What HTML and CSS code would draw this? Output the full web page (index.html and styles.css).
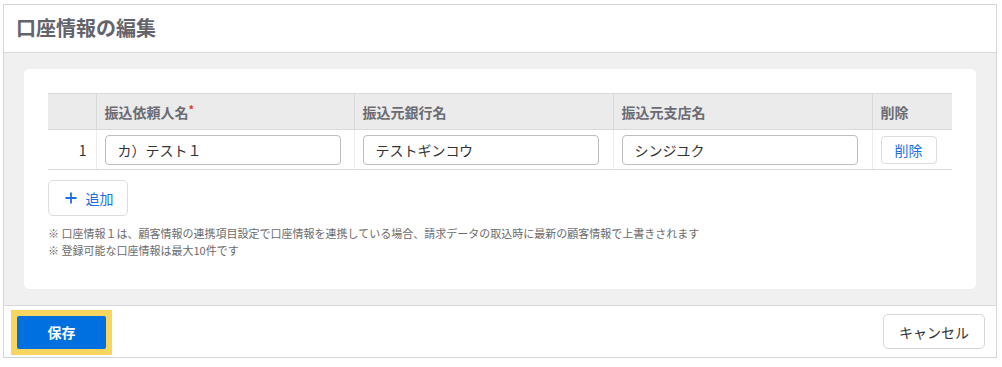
FILE: index.html
```html
<!DOCTYPE html>
<html lang="ja">
<head>
<meta charset="utf-8">
<title>口座情報の編集</title>
<link rel="stylesheet" href="styles.css">
</head>
<body>
<div class="frame">
  <header class="head">
    <h1 class="title">口座情報の編集</h1>
  </header>
  <main class="body">
    <section class="card">
      <table class="grid">
        <colgroup>
          <col class="c-no"><col class="c-name"><col class="c-bank"><col class="c-branch"><col class="c-del">
        </colgroup>
        <thead>
          <tr>
            <th></th>
            <th>振込依頼人名<span class="req">*</span></th>
            <th>振込元銀行名</th>
            <th>振込元支店名</th>
            <th>削除</th>
          </tr>
        </thead>
        <tbody>
          <tr>
            <td class="no">1</td>
            <td><input class="field" type="text" value="カ）テスト１"></td>
            <td><input class="field" type="text" value="テストギンコウ"></td>
            <td><input class="field" type="text" value="シンジユク"></td>
            <td><button class="del" type="button">削除</button></td>
          </tr>
        </tbody>
      </table>
      <button class="add" type="button"><svg class="plus" width="12" height="12" viewBox="0 0 12 12" aria-hidden="true"><path d="M6 0.5V11.5M0.5 6H11.5" stroke="currentColor" stroke-width="1.8" fill="none"/></svg>追加</button>
      <p class="notes">※ 口座情報１は、顧客情報の連携項目設定で口座情報を連携している場合、請求データの取込時に最新の顧客情報で上書きされます<br>※ 登録可能な口座情報は最大10件です</p>
    </section>
  </main>
  <footer class="foot">
    <span class="ring"><button class="save" type="button">保存</button></span>
    <button class="cancel" type="button">キャンセル</button>
  </footer>
</div>
</body>
</html>
```
FILE: styles.css
```css
* { box-sizing: border-box; }
html, body { margin: 0; padding: 0; background: #fff; }
body {
  font-family: "Noto Sans CJK JP", "Noto Sans", sans-serif;
  color: #333;
}
.frame {
  margin: 4px 0 0 3px;
  width: 994px;
  border: 1px solid #d6d6d6;
  background: #fff;
}
.head {
  height: 48px;
  border-bottom: 1px solid #d9d9d9;
  display: flex;
  align-items: center;
  padding-left: 12px;
}
.title {
  margin: 0;
  font-size: 20px;
  font-weight: 700;
  color: #63636b;
  line-height: 1;
  position: relative;
  top: -1px;
}
.body {
  background: #f0f0f0;
  padding: 16px 20px 16px 20px;
}
.card {
  background: #fff;
  border-radius: 5px;
  padding: 24px 23px 30px 24px;
}
.grid {
  width: 904px;
  border-collapse: collapse;
  table-layout: fixed;
}
.c-no { width: 48px; }
.c-name { width: 258px; }
.c-bank { width: 259px; }
.c-branch { width: 259px; }
.c-del { width: 80px; }
.grid th {
  background: #ebebeb;
  height: 36px;
  text-align: left;
  font-size: 14px;
  font-weight: 700;
  color: #6b6b73;
  padding: 0 8px;
  border-top: 1px solid #d9d9d9;
  border-bottom: 1px solid #d9d9d9;
  border-left: 1px solid #d9d9d9;
}
.grid th:first-child { border-left: none; }
.req { color: #e0352b; font-size: 11px; vertical-align: top; position: relative; top: -1px; }
.grid td {
  height: 40px;
  padding: 0 8px;
  border-bottom: 1px solid #d9d9d9;
  border-left: 1px solid #ececec;
  vertical-align: middle;
}
.grid td:first-child { border-left: none; }
.grid td.no {
  text-align: right;
  padding-right: 9px;
  font-size: 14px;
  color: #333;
}
.field {
  display: block;
  width: 236px;
  height: 30px;
  border: 1px solid #bdbdbd;
  border-radius: 4px;
  padding: 0 12px;
  font-family: inherit;
  font-size: 14px;
  color: #333;
  background: #fff;
}
.del {
  display: block;
  width: 56px;
  height: 28px;
  border: 1px solid #dcdcdc;
  border-radius: 4px;
  background: #fff;
  color: #1a6fe0;
  font-family: inherit;
  font-size: 14px;
  padding: 0;
}
.add {
  margin-top: 10px;
  width: 80px;
  height: 36px;
  border: 1px solid #dcdcdc;
  border-radius: 5px;
  background: #fff;
  color: #1a6fe0;
  font-family: inherit;
  font-size: 14px;
  display: flex;
  align-items: center;
  justify-content: center;
  padding: 0 0 0 2px;
}
.plus {
  display: block;
  margin-right: 9px;
}
.notes {
  margin: 9px 0 0 0;
  font-size: 11px;
  line-height: 17px;
  color: #6b6b6b;
}
.foot {
  border-top: 1px solid #d9d9d9;
  height: 52px;
  display: flex;
  align-items: center;
  justify-content: space-between;
  padding: 0 11px 0 7px;
}
.ring {
  display: block;
  background: #f8d55e;
  padding: 6px;
  margin-top: 1px;
}
.save {
  display: block;
  width: 89px;
  height: 33px;
  background: #0070e0;
  color: #fff;
  border: none;
  border-radius: 2px;
  font-family: inherit;
  font-size: 14px;
  font-weight: 700;
}
.cancel {
  width: 102px;
  height: 35px;
  background: #fff;
  color: #333;
  border: 1px solid #d6d6d6;
  border-radius: 5px;
  font-family: inherit;
  font-size: 14px;
}
```
